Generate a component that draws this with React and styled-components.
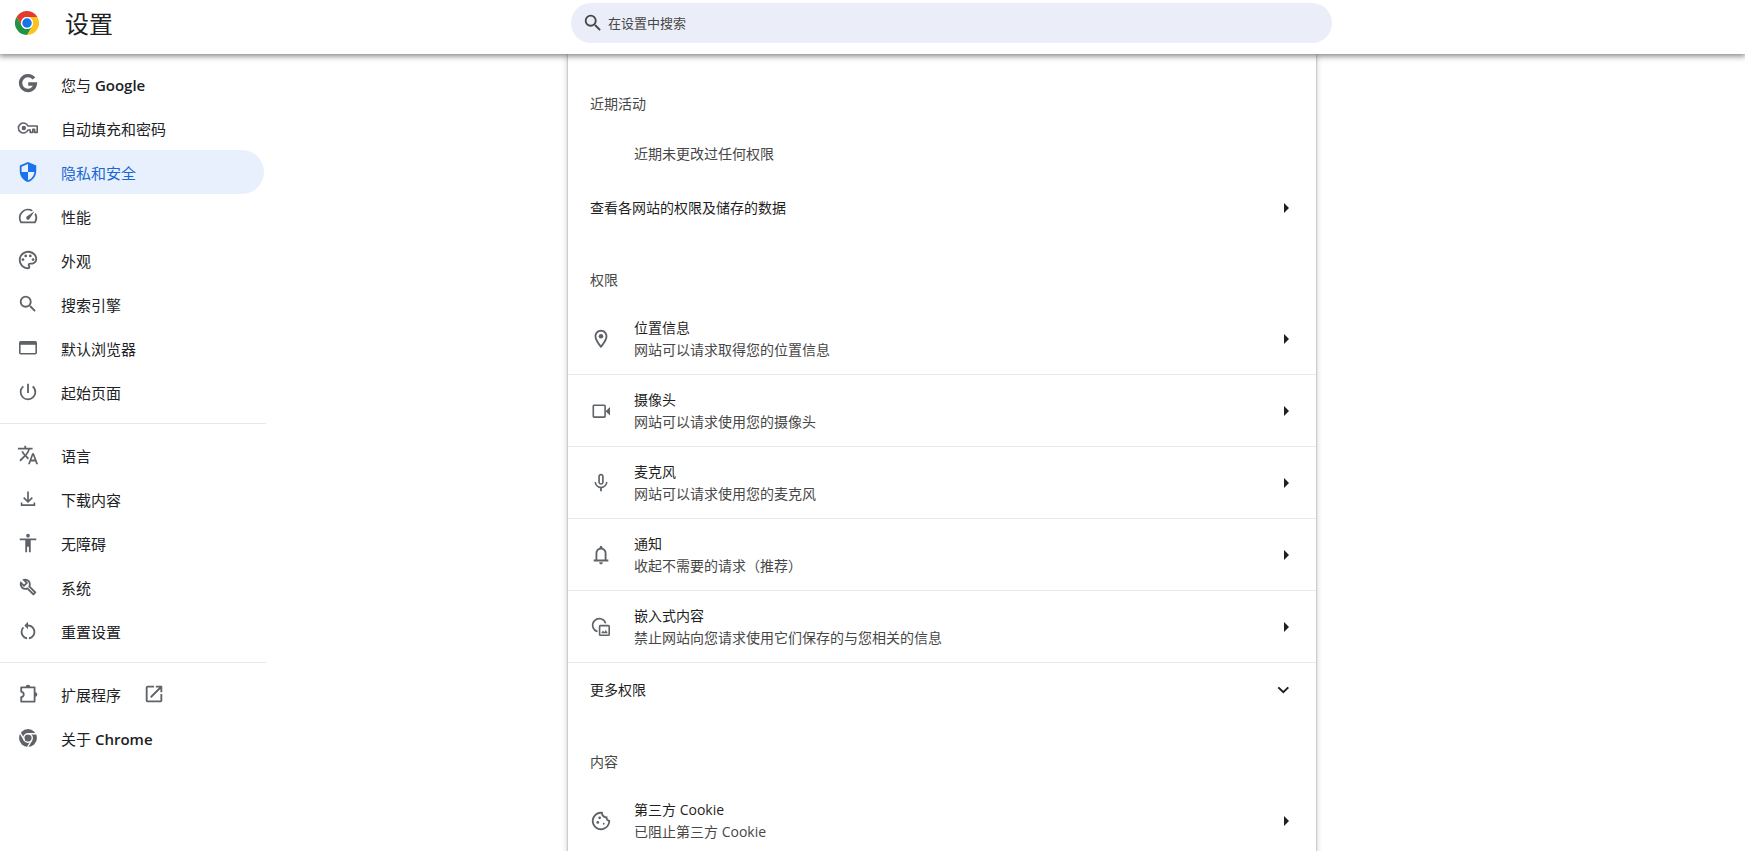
import React from 'react';
import styled, { createGlobalStyle, ThemeProvider } from 'styled-components';
import {
  MdSecurity,
  MdOutlineSpeed,
  MdOutlinePalette,
  MdSearch,
  MdPowerSettingsNew,
  MdTranslate,
  MdAccessibility,
  MdRestartAlt,
  MdOpenInNew,
  MdOutlineLocationOn,
  MdMicNone,
  MdOutlineCookie,
} from 'react-icons/md';

const theme = {
  text: '#202124',
  primary: '#1f1f1f',
  secondary: '#474747',
  icon: '#5f6368',
  blue: '#1a73e8',
  activeText: '#1967d2',
  activeBg: '#e8f0fe',
  searchBg: '#ebeef8',
  line: '#e8e8e8',
};

const GlobalStyle = createGlobalStyle`
  * {
    box-sizing: border-box;
  }
  body {
    margin: 0;
    background: #fff;
    font-family: 'Open Sans', 'Noto Sans CJK SC', sans-serif;
  }
`;

const Page = styled.div`
  display: flex;
  flex-direction: column;
  height: 100vh;
  overflow: hidden;
`;

const Toolbar = styled.header`
  position: relative;
  z-index: 1;
  display: grid;
  grid-template-columns: minmax(266px, 571fr) minmax(0, 761px) 413fr;
  flex-shrink: 0;
  padding: 3px 0 11px;
  background: #fff;
  box-shadow: 0 1px 6px 1px rgba(0, 0, 0, 0.5);
`;

const Brand = styled.div`
  display: flex;
  align-items: center;
  gap: 26px;
  padding-left: 15px;
`;

const Title = styled.h1`
  margin: 0;
  padding-top: 2px;
  font-size: 24px;
  line-height: 32px;
  font-weight: 400;
  color: ${props => props.theme.text};
`;

const Search = styled.label`
  display: flex;
  align-items: center;
  gap: 4px;
  height: 40px;
  padding: 0 12px 0 11px;
  border-radius: 20px;
  background: ${props => props.theme.searchBg};
  color: ${props => props.theme.secondary};
  svg {
    flex-shrink: 0;
    width: 22px;
    height: 22px;
  }
`;

const SearchInput = styled.input`
  flex: 1;
  min-width: 0;
  padding: 0;
  border: 0;
  outline: 0;
  background: transparent;
  font-family: inherit;
  font-size: 13px;
  line-height: 20px;
  color: inherit;
  &::placeholder {
    color: inherit;
    opacity: 1;
  }
`;

const Body = styled.div`
  display: grid;
  grid-template-columns: minmax(266px, 568fr) minmax(0, 748px) 429fr;
  flex: 1;
  min-height: 0;
`;

const Sidebar = styled.nav`
  width: 266px;
  padding-top: 8px;
`;

const Menu = styled.ul`
  margin: 0;
  padding: 0;
  list-style: none;
  & + & {
    margin-top: 9px;
    padding-top: 9px;
    border-top: 1px solid ${props => props.theme.line};
  }
`;

const MenuLink = styled.a`
  display: flex;
  align-items: center;
  gap: 22px;
  height: 44px;
  margin-right: 2px;
  padding-left: 17px;
  border-radius: 0 22px 22px 0;
  background: ${props => (props.$active ? props.theme.activeBg : 'transparent')};
  color: ${props => (props.$active ? props.theme.activeText : props.theme.text)};
  font-size: 15px;
  line-height: 20px;
  text-decoration: none;
  svg {
    flex-shrink: 0;
    width: 22px;
    height: 22px;
    color: ${props => (props.$active ? props.theme.blue : props.theme.icon)};
  }
`;

const MenuText = styled.span`
  padding-top: 2px;
`;

const Latin = styled.span`
  font-weight: 600;
`;

const Card = styled.main`
  padding-top: 4px;
  background: #fff;
  box-shadow: 0 0 2px rgba(60, 64, 67, 0.5), 0 1px 6px 1px rgba(60, 64, 67, 0.2);
`;

const SectionTitle = styled.h2`
  margin: 0;
  padding: 36px 22px 13px;
  font-size: 14px;
  line-height: 20px;
  font-weight: 400;
  color: ${props => props.theme.secondary};
`;

const Note = styled.p`
  margin: 0;
  padding: 17px 22px 17px 66px;
  font-size: 14px;
  line-height: 20px;
  color: ${props => props.theme.secondary};
`;

const Row = styled.button`
  display: flex;
  align-items: center;
  gap: 22px;
  width: 100%;
  min-height: 53px;
  padding: 0 22px;
  border: 0;
  background: transparent;
  font-family: inherit;
  font-size: 14px;
  line-height: 22px;
  text-align: left;
  color: ${props => props.theme.primary};
  > svg {
    flex-shrink: 0;
    width: 22px;
    height: 22px;
    color: ${props => props.theme.icon};
  }
`;

const SiteRow = styled(Row)`
  min-height: 72px;
  border-bottom: 1px solid ${props => props.theme.line};
`;

const RowText = styled.span`
  flex: 1;
  min-width: 0;
`;

const Label = styled.span`
  display: block;
`;

const Sub = styled(Label)`
  color: ${props => props.theme.secondary};
`;

const RowEnd = styled.span`
  display: flex;
  svg {
    width: 20px;
    height: 20px;
  }
`;

const ChromeLogo = () => (
  <svg width="24" height="24" viewBox="0 0 48 48" aria-hidden="true">
    <circle cx="24" cy="24" r="24" fill="#fff" />
    <path fill="#e33b2e" d="M3.2 12A24 24 0 0 1 44.8 12H24A12 12 0 0 0 13.6 30Z" />
    <path fill="#fcc31e" d="M44.8 12A24 24 0 0 1 24 48L34.4 30A12 12 0 0 0 24 12Z" />
    <path fill="#229342" d="M24 48A24 24 0 0 1 3.2 12L13.6 30A12 12 0 0 0 34.4 30Z" />
    <circle cx="24" cy="24" r="12" fill="#fff" />
    <circle cx="24" cy="24" r="9.5" fill="#1a73e8" />
  </svg>
);

const GoogleIcon = () => (
  <svg viewBox="0 0 22 22" fill="none" stroke="currentColor" strokeWidth="3.4" aria-hidden="true">
    <path d="M16.9 5.6A7.4 7.4 0 1 0 18.3 11H11.2" />
  </svg>
);

const KeyIcon = () => (
  <svg viewBox="0 0 22 22" aria-hidden="true">
    <path
      fill="none"
      stroke="currentColor"
      strokeWidth="1.6"
      strokeLinejoin="round"
      d="M11 9H20.2V15.4H17.6V12.4H15.8V15.4H13.2V13H11A5 5 0 1 1 11 9Z"
    />
    <circle cx="6.8" cy="11" r="2.2" fill="currentColor" />
  </svg>
);

const WindowIcon = () => (
  <svg viewBox="0 0 22 22" aria-hidden="true">
    <rect x="2.8" y="4.8" width="16.4" height="12" rx="1" fill="none" stroke="currentColor" strokeWidth="1.6" />
    <path fill="currentColor" d="M2.8 4.8H19.2V7.8H2.8Z" />
  </svg>
);

const WrenchIcon = () => (
  <svg viewBox="0 -960 960 960" fill="currentColor" aria-hidden="true">
    <path d="M686-132 444-376q-20 8-40.5 12t-43.5 4q-100 0-170-70t-70-170q0-36 10-68.5t28-61.5l146 146 72-72-146-146q29-18 61.5-28t68.5-10q100 0 170 70t70 170q0 23-4 43.5T584-516l244 242q12 12 12 29t-12 29l-84 84q-12 12-29 12t-29-12Zm29-85 27-27-256-256q18-20 26-46.5t8-53.5q0-60-38.5-104.5T386-758l74 74q12 12 12 28t-12 28L332-500q-12 12-28 12t-28-12l-74-74q9 57 53.5 95.5T360-440q26 0 52-8t47-25l256 256Z" />
  </svg>
);

const BellIcon = () => (
  <svg viewBox="0 -960 960 960" fill="currentColor" aria-hidden="true">
    <path d="M160-200v-80h80v-280q0-83 50-147.5T420-792v-28q0-25 17.5-42.5T480-880q25 0 42.5 17.5T540-820v28q80 20 130 84.5T720-560v280h80v80H160Zm320 120q-33 0-56.5-23.5T400-160h160q0 33-23.5 56.5T480-80ZM320-280h320v-280q0-66-47-113t-113-47q-66 0-113 47t-47 113v280Z" />
  </svg>
);

const ChromeIcon = () => (
  <svg viewBox="0 0 48 48" aria-hidden="true">
    <circle cx="24" cy="24" r="19.5" fill="currentColor" />
    <circle cx="24" cy="24" r="9.3" fill="none" stroke="#fff" strokeWidth="3" />
    <path d="M24 14.7H42M16 28.6L7 13M32 28.6L23 44.2" stroke="#fff" strokeWidth="3" />
  </svg>
);

const DownloadIcon = () => (
  <svg viewBox="0 0 22 22" fill="none" stroke="currentColor" strokeWidth="1.7" aria-hidden="true">
    <path d="M11 3.5V13.5M6.7 9.6L11 13.9L15.3 9.6M4.6 14.4V17.2H17.4V14.4" />
  </svg>
);

const ExtensionIcon = () => (
  <svg viewBox="0 0 22 22" aria-hidden="true">
    <path
      fill="none"
      stroke="currentColor"
      strokeWidth="1.8"
      strokeLinejoin="round"
      d="M4.2 4.4H17.6V18.6H4.2V14.2C7.6 13.4 7.6 9.4 4.2 8.7Z"
    />
    <path fill="currentColor" d="M8.7 4A2.3 2.3 0 0 1 13.3 4ZM18 9.2A2.3 2.3 0 0 1 18 13.8Z" />
  </svg>
);

const CameraIcon = () => (
  <svg viewBox="0 0 22 22" aria-hidden="true">
    <rect x="3.3" y="5.3" width="11.8" height="11.8" rx="0.8" fill="none" stroke="currentColor" strokeWidth="1.6" />
    <path fill="currentColor" d="M15.6 11.2L20 7V15.4Z" />
  </svg>
);

const EmbeddedIcon = () => (
  <svg viewBox="0 0 22 22" fill="none" stroke="currentColor" strokeWidth="1.6" aria-hidden="true">
    <path d="M7.5 15.6A6.6 6.6 0 1 1 15.6 7.4" />
    <rect x="9.6" y="9.6" width="9.6" height="9.6" rx="0.8" />
    <path fill="currentColor" stroke="none" d="M11.2 17.2L12.9 14.6L14.3 16.2L15.8 14L17.8 17.2Z" />
  </svg>
);

const ArrowIcon = () => (
  <svg viewBox="0 0 20 20" aria-hidden="true">
    <path fill="currentColor" d="M10 5L15 10L10 15Z" />
  </svg>
);

const ExpandIcon = () => (
  <svg viewBox="0 0 20 20" fill="none" stroke="currentColor" strokeWidth="2" aria-hidden="true">
    <path d="M4.3 7.4L9.3 12.2L14.3 7.4" />
  </svg>
);

const menus = [
  [
    { text: '您与', latin: 'Google', Icon: GoogleIcon },
    { text: '自动填充和密码', Icon: KeyIcon },
    { text: '隐私和安全', Icon: MdSecurity, active: true },
    { text: '性能', Icon: MdOutlineSpeed },
    { text: '外观', Icon: MdOutlinePalette },
    { text: '搜索引擎', Icon: MdSearch },
    { text: '默认浏览器', Icon: WindowIcon },
    { text: '起始页面', Icon: MdPowerSettingsNew },
  ],
  [
    { text: '语言', Icon: MdTranslate },
    { text: '下载内容', Icon: DownloadIcon },
    { text: '无障碍', Icon: MdAccessibility },
    { text: '系统', Icon: WrenchIcon },
    { text: '重置设置', Icon: MdRestartAlt },
  ],
  [
    { text: '扩展程序', Icon: ExtensionIcon, external: true },
    { text: '关于', latin: 'Chrome', Icon: ChromeIcon },
  ],
];

const permissions = [
  { label: '位置信息', sub: '网站可以请求取得您的位置信息', Icon: MdOutlineLocationOn },
  { label: '摄像头', sub: '网站可以请求使用您的摄像头', Icon: CameraIcon },
  { label: '麦克风', sub: '网站可以请求使用您的麦克风', Icon: MdMicNone },
  { label: '通知', sub: '收起不需要的请求（推荐）', Icon: BellIcon },
  { label: '嵌入式内容', sub: '禁止网站向您请求使用它们保存的与您相关的信息', Icon: EmbeddedIcon },
];

const contents = [
  { label: '第三方 Cookie', sub: '已阻止第三方 Cookie', Icon: MdOutlineCookie },
];

const SiteSetting = ({ label, sub, Icon }) => (
  <SiteRow type="button">
    <Icon />
    <RowText>
      <Label>{label}</Label>
      <Sub>{sub}</Sub>
    </RowText>
    <RowEnd>
      <ArrowIcon />
    </RowEnd>
  </SiteRow>
);

const App = () => (
  <ThemeProvider theme={theme}>
    <GlobalStyle />
    <Page lang="zh-CN">
      <Toolbar>
        <Brand>
          <ChromeLogo />
          <Title>设置</Title>
        </Brand>
        <Search htmlFor="search">
          <MdSearch />
          <SearchInput id="search" type="text" placeholder="在设置中搜索" />
        </Search>
      </Toolbar>
      <Body>
        <Sidebar>
          {menus.map((items, i) => (
            <Menu key={i}>
              {items.map(({ text, latin, Icon, active, external }) => (
                <li key={text}>
                  <MenuLink href="#" $active={active}>
                    <Icon />
                    <MenuText>
                      {text}
                      {latin && <Latin> {latin}</Latin>}
                    </MenuText>
                    {external && <MdOpenInNew />}
                  </MenuLink>
                </li>
              ))}
            </Menu>
          ))}
        </Sidebar>
        <Card>
          <SectionTitle>近期活动</SectionTitle>
          <Note>近期未更改过任何权限</Note>
          <Row type="button">
            <RowText>查看各网站的权限及储存的数据</RowText>
            <RowEnd>
              <ArrowIcon />
            </RowEnd>
          </Row>
          <SectionTitle>权限</SectionTitle>
          {permissions.map(item => (
            <SiteSetting key={item.label} {...item} />
          ))}
          <Row type="button" aria-expanded="false">
            <RowText>更多权限</RowText>
            <RowEnd>
              <ExpandIcon />
            </RowEnd>
          </Row>
          <SectionTitle>内容</SectionTitle>
          {contents.map(item => (
            <SiteSetting key={item.label} {...item} />
          ))}
        </Card>
      </Body>
    </Page>
  </ThemeProvider>
);

export default App;
